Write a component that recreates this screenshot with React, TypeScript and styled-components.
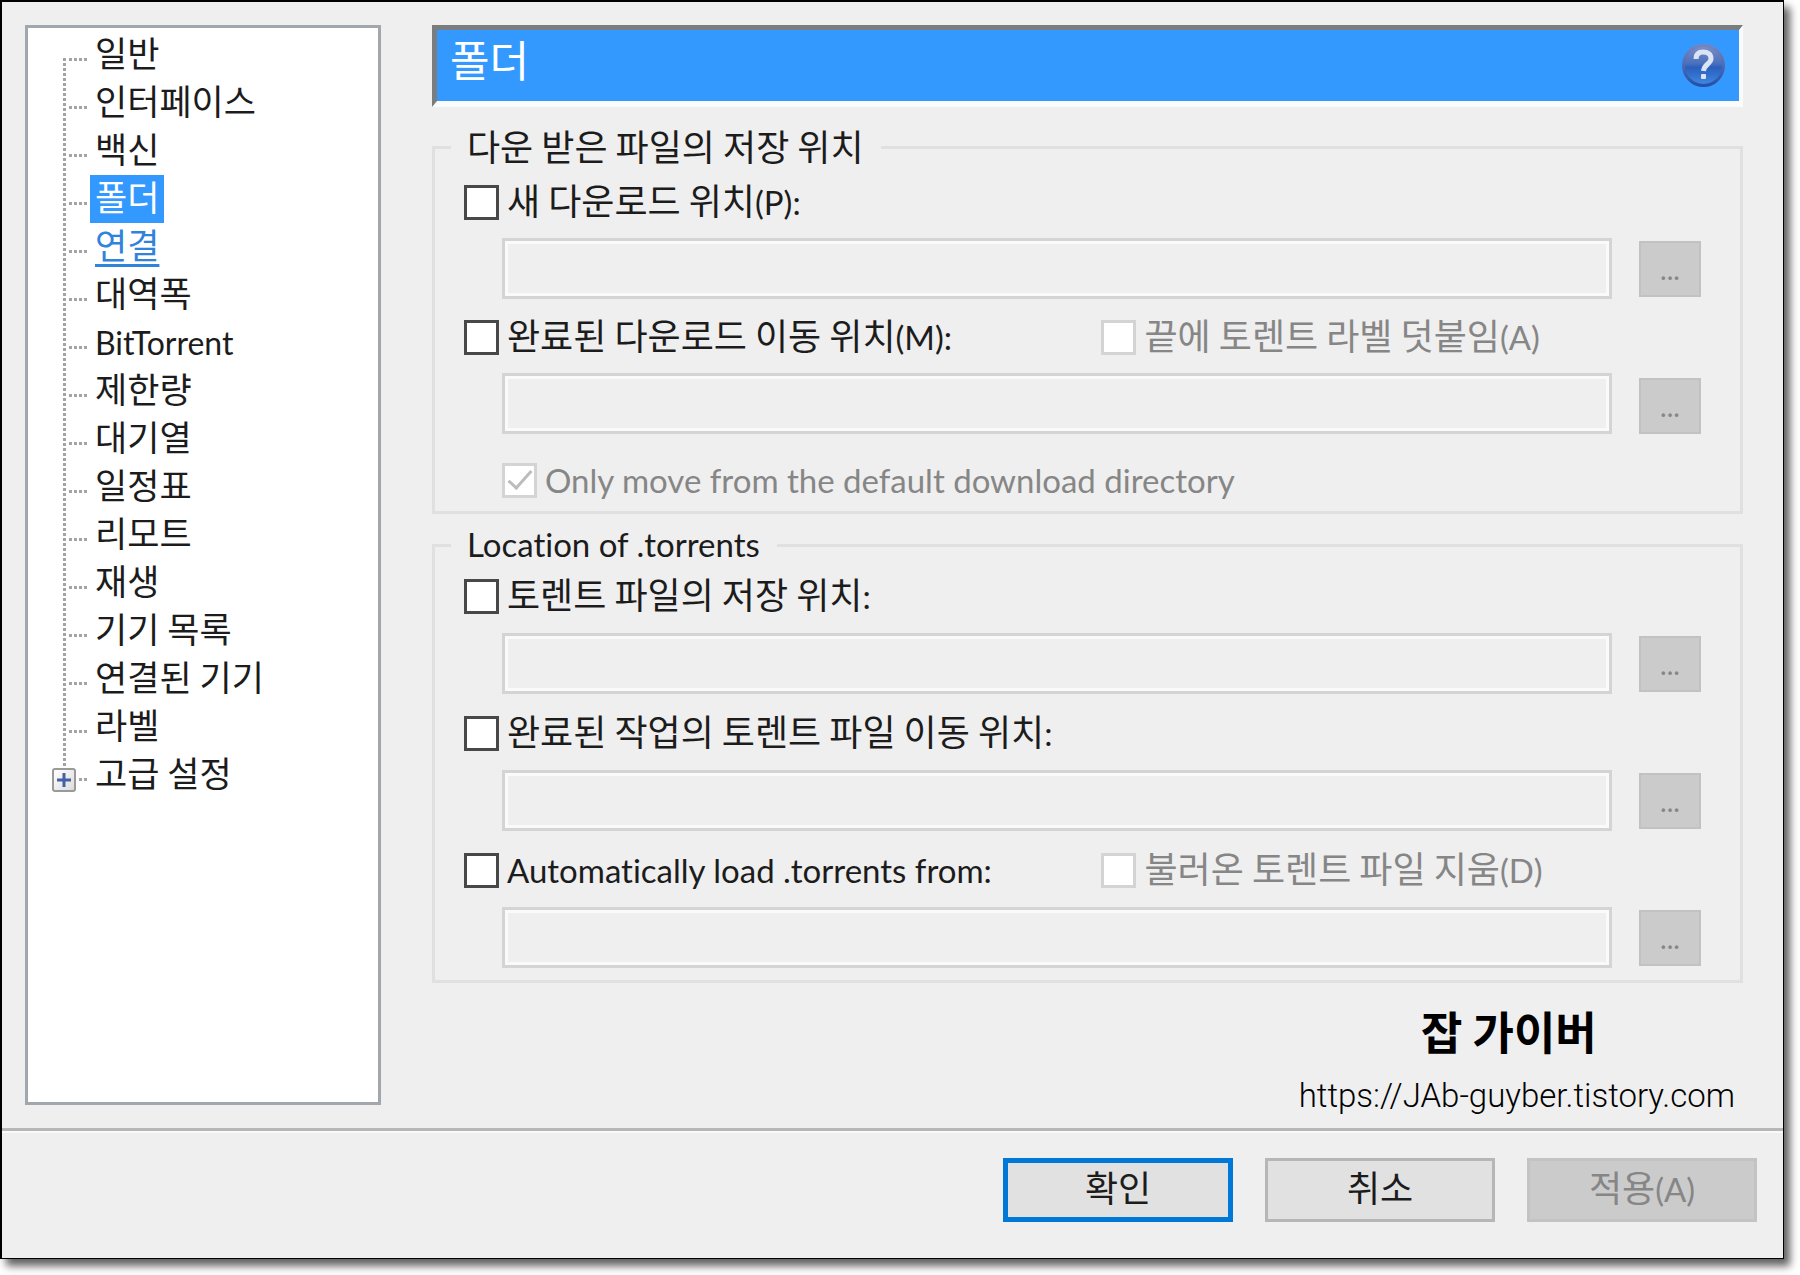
import React, { useId } from 'react';
import styled, { createGlobalStyle, css } from 'styled-components';

const colors = {
  face: '#efefef',
  text: '#1c1c1c',
  muted: '#868686',
  accent: '#3399ff',
  link: '#2f83dc',
  field: '#d4d4d4',
  group: '#e0e0e0',
};

const GlobalStyle = createGlobalStyle`
  *, *::before, *::after { box-sizing: border-box; }
  body {
    margin: 0;
    background: #fff;
    color: ${colors.text};
    font-family: "Noto Sans CJK KR", sans-serif;
    font-size: 36px;
    line-height: 40px;
  }
  button, input { font: inherit; }
`;

const Page = styled.div`
  padding: 0 16px 17px 0;
`;

const Dialog = styled.main`
  display: flex;
  flex-direction: column;
  background: ${colors.face};
  border: solid #000;
  border-width: 2px 1px 1px 2px;
  box-shadow: 6px 7px 8px rgba(0, 0, 0, 0.62);
`;

const Body = styled.div`
  display: flex;
  gap: 51px;
  padding: 23px 40px 0 23px;
`;

const Sidebar = styled.nav`
  flex: 0 0 356px;
  margin-bottom: 23px;
  padding-top: 3px;
  background: #fff;
  border: 3px solid #a2a7ad;
`;

const Tree = styled.ul`
  margin: 0;
  padding: 0;
  list-style: none;
  font-size: 35px;
  background: repeating-linear-gradient(#a4a4a4 0 3px, #fff 3px 5px) 35px 27px / 3px calc(100% - 54px) no-repeat;
`;

const TreeRow = styled.li`
  display: flex;
  height: 48px;
`;

const Branch = styled.span<{ $short?: boolean }>`
  display: flex;
  flex: 0 0 62px;
  padding: 17px 0 0 24px;
  background: repeating-linear-gradient(to right, #a4a4a4 0 3px, #fff 3px 5px) no-repeat;
  background-position: ${(p) => (p.$short ? '51px' : '41px')} 27px;
  background-size: ${(p) => (p.$short ? '8px' : '18px')} 3px;
`;

const Expander = styled.button`
  display: grid;
  place-items: center;
  width: 24px;
  height: 24px;
  padding: 0;
  border: 2px solid #9a9a9a;
  border-radius: 3px;
  background: linear-gradient(135deg, #fff, #dcdcdc);
  color: #4560a8;
`;

const Latin = styled.span`
  font-family: Lato, sans-serif;
  font-size: 33px;
  font-variant-ligatures: none;
  line-height: 1;
`;

const TreeLink = styled.a<{ $state?: 'selected' | 'hover' }>`
  padding: 0 5px;
  line-height: 42px;
  white-space: nowrap;
  color: inherit;
  text-decoration: none;

  ${Latin} {
    font-size: 32px;
  }
  ${(p) =>
    p.$state === 'selected' &&
    css`
      background: ${colors.accent};
      color: #fff;
    `}
  ${(p) =>
    p.$state === 'hover' &&
    css`
      color: ${colors.link};
      text-decoration: underline 3px;
      text-underline-offset: 5px;
    `}
`;

const Panel = styled.div`
  display: flex;
  flex: 1;
  flex-direction: column;
  min-width: 0;
  padding-bottom: 17px;
`;

const Banner = styled.header`
  display: flex;
  align-items: center;
  justify-content: space-between;
  height: 82px;
  padding: 0 14px 0 13px;
  background: ${colors.accent};
  border: solid;
  border-width: 5px 4px 6px 5px;
  border-color: #7a7d80 #fbfbfb #fbfbfb #7a7d80;
`;

const Title = styled.h1`
  margin: 0;
  padding-bottom: 16px;
  font-size: 43px;
  font-weight: 400;
  line-height: 48px;
  color: #fff;
`;

const HelpButton = styled.button`
  display: block;
  width: 43px;
  height: 43px;
  padding: 0;
  border: 0;
  background: none;
`;

const Group = styled.fieldset<{ $gap: number; $top: number; $before: number }>`
  display: flex;
  flex-direction: column;
  gap: ${(p) => p.$gap}px;
  min-width: 0;
  margin: ${(p) => p.$before}px 0 0;
  padding: ${(p) => p.$top}px 39px 12px 29px;
  border: 3px solid ${colors.group};
`;

const Legend = styled.legend`
  margin-left: -13px;
  padding: 0 17px 4px 16px;
  line-height: 32px;
`;

const OptionRow = styled.div<{ $indent?: boolean }>`
  display: grid;
  grid-template-columns: ${(p) => (p.$indent ? '1fr' : 'minmax(0, 638fr) minmax(0, 600fr)')};
  align-items: center;
  height: 40px;
  ${(p) => p.$indent && 'margin: 8px 0 0 38px;'}
`;

const Option = styled.span`
  display: flex;
  align-items: center;
  gap: 8px;
  white-space: nowrap;
`;

const OptionLabel = styled.label<{ $disabled?: boolean }>`
  padding-bottom: 4px;
  line-height: 36px;
  color: ${(p) => (p.$disabled ? colors.muted : 'inherit')};
`;

const Tick = styled.input`
  display: grid;
  place-items: center;
  flex: 0 0 35px;
  height: 35px;
  margin: 0;
  appearance: none;
  background: #fff;
  border: 3px solid #484848;

  &:disabled {
    border-color: ${colors.field};
  }

  &:checked::after {
    content: '';
    width: 12px;
    height: 24px;
    margin-top: -7px;
    border: solid #bcbcbc;
    border-width: 0 3px 3px 0;
    transform: rotate(42deg);
  }
`;

const FieldRow = styled.div<{ $low?: boolean }>`
  display: flex;
  align-items: ${(p) => (p.$low ? 'flex-end' : 'center')};
  gap: 27px;
  padding-left: 38px;
`;

const PathInput = styled.input`
  flex: 1;
  min-width: 0;
  height: 61px;
  padding: 0 8px;
  background: ${colors.face};
  border: 3px solid ${colors.field};
  box-shadow: inset 0 0 0 3px #fafafa;
`;

const BrowseButton = styled.button`
  flex: 0 0 62px;
  height: 56px;
  padding: 0;
  background: #cbcbcb;
  border: 2px solid #c2c2c2;
  color: ${colors.muted};
  font-family: Lato, sans-serif;
  font-size: 28px;
  line-height: 28px;
`;

const Signature = styled.div`
  display: flex;
  flex-direction: column;
  align-self: flex-end;
  align-items: center;
  gap: 26px;
  margin: 24px 8px 0 0;
  color: #000;
`;

const SignatureName = styled.strong`
  padding-right: 16px;
  font-size: 45px;
  line-height: 48px;
`;

const SignatureLink = styled.a`
  color: inherit;
  font-family: Roboto, sans-serif;
  font-size: 33px;
  font-weight: 300;
  line-height: 30px;
  text-decoration: none;
`;

const Footer = styled.footer`
  display: flex;
  justify-content: flex-end;
  gap: 32px;
  padding: 27px 26px 36px;
  border-top: 3px solid #b7b7b7;
  box-shadow: inset 0 2px #fafafa;
`;

const ActionButton = styled.button<{ $primary?: boolean }>`
  width: 230px;
  height: 64px;
  padding: 0 0 8px;
  background: #e1e1e1;
  border: ${(p) => (p.$primary ? '5px solid #0078d7' : '3px solid #b6b6b6')};
  color: inherit;

  &:disabled {
    background: #cbcbcb;
    border-color: #c3c3c3;
    color: ${colors.muted};
  }
`;

function HelpIcon() {
  return (
    <svg width="43" height="43" viewBox="0 0 43 43" aria-hidden="true">
      <defs>
        <linearGradient id="ball" x1="0" y1="0" x2="0" y2="1">
          <stop offset="0" stopColor="#7d8fc9" />
          <stop offset="0.45" stopColor="#4a70bd" />
          <stop offset="0.55" stopColor="#2a5fbd" />
          <stop offset="1" stopColor="#3f8ae6" />
        </linearGradient>
        <linearGradient id="rim" x1="0" y1="0" x2="0" y2="1">
          <stop offset="0" stopColor="#7684bd" />
          <stop offset="1" stopColor="#2450a8" />
        </linearGradient>
      </defs>
      <circle cx="21.5" cy="21.5" r="20" fill="url(#ball)" stroke="url(#rim)" strokeWidth="3" />
      <path
        d="M14 15 C14 10 17 8 21 8 C26 8 29 10.500 29 14.500 C29 20 22 20 21.500 27"
        fill="none"
        stroke="#dbe4f5"
        strokeWidth="5"
      />
      <rect x="19" y="30" width="5" height="5" rx="1" fill="#dbe4f5" />
    </svg>
  );
}

function PlusIcon() {
  return (
    <svg width="14" height="14" viewBox="0 0 14 14" aria-hidden="true">
      <path d="M7 0V14M0 7H14" stroke="currentColor" strokeWidth="3" />
    </svg>
  );
}

type CheckProps = { text?: string; latin?: string; disabled?: boolean; checked?: boolean };

function Check({ text, latin, disabled, checked }: CheckProps) {
  const id = useId();
  return (
    <Option>
      <Tick type="checkbox" id={id} disabled={disabled} defaultChecked={checked} />
      <OptionLabel htmlFor={id} $disabled={disabled}>
        {text}
        {latin && <Latin>{latin}</Latin>}
      </OptionLabel>
    </Option>
  );
}

function PathField({ name, low }: { name: string; low?: boolean }) {
  return (
    <FieldRow $low={low}>
      <PathInput type="text" aria-label={name} disabled />
      <BrowseButton type="button" disabled>
        ...
      </BrowseButton>
    </FieldRow>
  );
}

type Item = { label: string; state?: 'selected' | 'hover'; latin?: boolean; children?: boolean };

const items: Item[] = [
  { label: '일반' },
  { label: '인터페이스' },
  { label: '백신' },
  { label: '폴더', state: 'selected' },
  { label: '연결', state: 'hover' },
  { label: '대역폭' },
  { label: 'BitTorrent', latin: true },
  { label: '제한량' },
  { label: '대기열' },
  { label: '일정표' },
  { label: '리모트' },
  { label: '재생' },
  { label: '기기 목록' },
  { label: '연결된 기기' },
  { label: '라벨' },
  { label: '고급 설정', children: true },
];

export default function App() {
  return (
    <Page>
      <GlobalStyle />
      <Dialog>
        <Body>
          <Sidebar>
            <Tree>
              {items.map((item) => (
                <TreeRow key={item.label}>
                  <Branch $short={item.children}>
                    {item.children && (
                      <Expander type="button" aria-label={item.label}>
                        <PlusIcon />
                      </Expander>
                    )}
                  </Branch>
                  <TreeLink href="#" $state={item.state}>
                    {item.latin ? <Latin>{item.label}</Latin> : item.label}
                  </TreeLink>
                </TreeRow>
              ))}
            </Tree>
          </Sidebar>

          <Panel>
            <Banner>
              <Title>폴더</Title>
              <HelpButton type="button" aria-label="?">
                <HelpIcon />
              </HelpButton>
            </Banner>

            <Group $before={22} $top={16} $gap={17}>
              <Legend>다운 받은 파일의 저장 위치</Legend>
              <OptionRow>
                <Check text="새 다운로드 위치" latin="(P):" />
              </OptionRow>
              <PathField name="새 다운로드 위치" />
              <OptionRow>
                <Check text="완료된 다운로드 이동 위치" latin="(M):" />
                <Check text="끝에 토렌트 라벨 덧붙임" latin="(A)" disabled />
              </OptionRow>
              <PathField name="완료된 다운로드 이동 위치" low />
              <OptionRow $indent>
                <Check latin="Only move from the default download directory" disabled checked />
              </OptionRow>
            </Group>

            <Group $before={11} $top={10} $gap={18}>
              <Legend>
                <Latin>Location of .torrents</Latin>
              </Legend>
              <OptionRow>
                <Check text="토렌트 파일의 저장 위치" latin=":" />
              </OptionRow>
              <PathField name="토렌트 파일의 저장 위치" />
              <OptionRow>
                <Check text="완료된 작업의 토렌트 파일 이동 위치" latin=":" />
              </OptionRow>
              <PathField name="완료된 작업의 토렌트 파일 이동 위치" />
              <OptionRow>
                <Check latin="Automatically load .torrents from:" />
                <Check text="불러온 토렌트 파일 지움" latin="(D)" disabled />
              </OptionRow>
              <PathField name="Automatically load .torrents from" />
            </Group>

            <Signature>
              <SignatureName>잡 가이버</SignatureName>
              <SignatureLink href="https://JAb-guyber.tistory.com">https://JAb-guyber.tistory.com</SignatureLink>
            </Signature>
          </Panel>
        </Body>

        <Footer>
          <ActionButton type="button" $primary>
            확인
          </ActionButton>
          <ActionButton type="button">취소</ActionButton>
          <ActionButton type="button" disabled>
            적용<Latin>(A)</Latin>
          </ActionButton>
        </Footer>
      </Dialog>
    </Page>
  );
}
